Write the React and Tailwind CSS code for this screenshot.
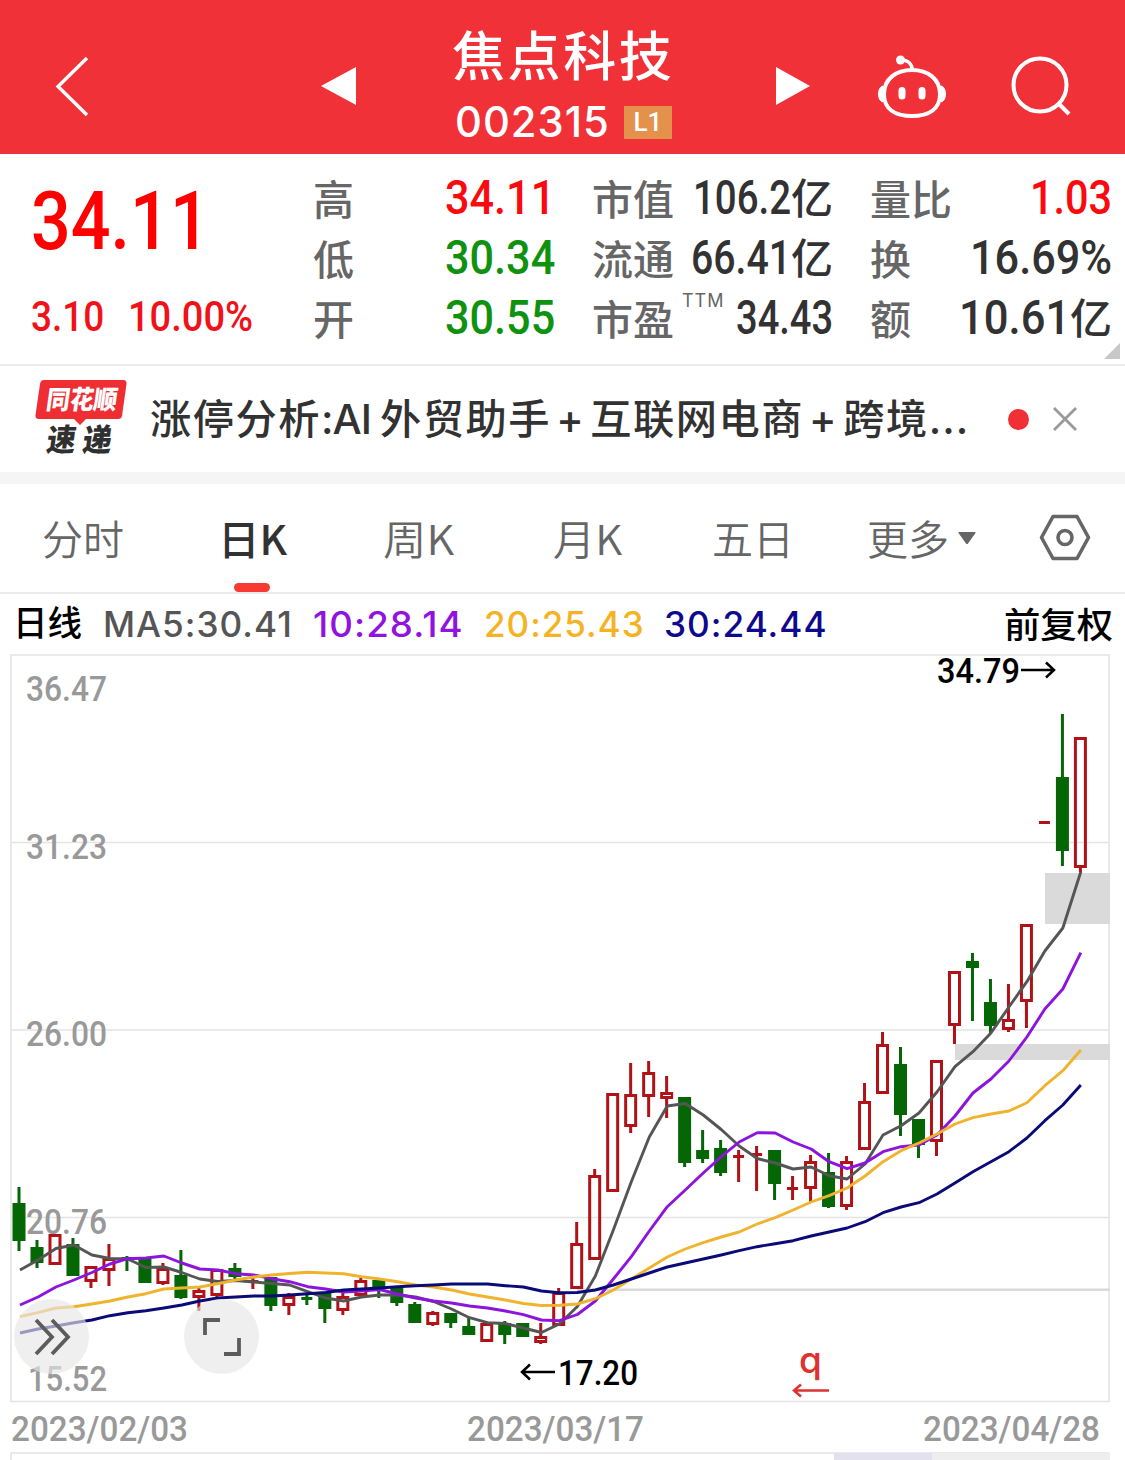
import { useLayoutEffect, useRef, useState } from "react";

const tabs = [
  { label: "分时", width: 82, gap: "ml-[42px]" },
  { label: "日K", width: 69, gap: "ml-[94px]", active: true },
  { label: "周K", width: 71, gap: "ml-[96px]" },
  { label: "月K", width: 69, gap: "ml-[99px]" },
  { label: "五日", width: 82, gap: "ml-[90px]" },
  { label: "更多", width: 82, gap: "ml-[73px]" },
];

const averages = [
  { text: "MA5:30.41", width: 190, gap: "ml-[21px]", color: "text-[#555555]" },
  { text: "10:28.14", width: 151, gap: "ml-[20px]", color: "text-[#9013e0]" },
  { text: "20:25.43", width: 161, gap: "ml-[20px]", color: "text-[#f5b324]" },
  { text: "30:24.44", width: 164, gap: "ml-[19px]", color: "text-[#0f0a8c]" },
];

// [up, body top, body bottom, wick top, wick bottom]
const candles = [
  [0, 1203, 1241, 1187, 1251],
  [0, 1247, 1263, 1240, 1268],
  [1, 1234, 1265, 1234, 1265],
  [0, 1244, 1276, 1238, 1276],
  [1, 1266, 1282, 1266, 1288],
  [1, 1258, 1271, 1244, 1286],
  [0, 1257, 1260, 1256, 1271],
  [0, 1258, 1283, 1258, 1283],
  [1, 1268, 1284, 1263, 1285],
  [0, 1275, 1298, 1250, 1299],
  [1, 1290, 1298, 1288, 1311],
  [1, 1269, 1296, 1269, 1299],
  [0, 1268, 1277, 1263, 1279],
  [1, 1280, 1283, 1277, 1289],
  [0, 1277, 1306, 1277, 1311],
  [1, 1296, 1306, 1293, 1315],
  [0, 1297, 1300, 1295, 1305],
  [0, 1293, 1309, 1293, 1323],
  [1, 1296, 1311, 1293, 1315],
  [1, 1280, 1296, 1278, 1296],
  [0, 1280, 1288, 1280, 1298],
  [0, 1287, 1303, 1287, 1306],
  [0, 1304, 1323, 1302, 1323],
  [1, 1312, 1325, 1311, 1326],
  [0, 1313, 1323, 1313, 1328],
  [0, 1326, 1335, 1318, 1335],
  [1, 1323, 1342, 1323, 1342],
  [0, 1323, 1335, 1321, 1344],
  [0, 1323, 1337, 1323, 1337],
  [1, 1336, 1343, 1323, 1344],
  [1, 1292, 1326, 1288, 1326],
  [1, 1243, 1289, 1222, 1289],
  [1, 1175, 1260, 1169, 1260],
  [1, 1093, 1192, 1093, 1192],
  [1, 1094, 1127, 1063, 1133],
  [1, 1072, 1097, 1061, 1117],
  [1, 1092, 1099, 1076, 1118],
  [0, 1097, 1163, 1097, 1167],
  [0, 1150, 1159, 1130, 1163],
  [0, 1148, 1173, 1140, 1176],
  [1, 1155, 1158, 1150, 1182],
  [1, 1153, 1156, 1146, 1191],
  [0, 1150, 1184, 1150, 1200],
  [1, 1187, 1190, 1176, 1200],
  [1, 1161, 1189, 1155, 1203],
  [0, 1172, 1207, 1153, 1208],
  [1, 1161, 1207, 1156, 1210],
  [1, 1101, 1150, 1083, 1150],
  [1, 1044, 1094, 1032, 1094],
  [0, 1064, 1115, 1047, 1136],
  [0, 1119, 1145, 1119, 1158],
  [1, 1060, 1142, 1060, 1156],
  [1, 971, 1026, 971, 1044],
  [0, 961, 968, 953, 1021],
  [0, 1002, 1026, 979, 1033],
  [1, 1019, 1030, 984, 1032],
  [1, 924, 1002, 924, 1028],
  [1, 821, 824, 821, 824],
  [0, 777, 851, 714, 866],
  [1, 737, 868, 737, 872],
];

const ma5 = [
  1270, 1260, 1248.5, 1245, 1255, 1258.5, 1259, 1267.5, 1267, 1272.5, 1279, 1281.5, 1280.5, 1282, 1283.5,
  1285, 1291.7, 1298, 1301, 1297, 1295, 1295, 1297, 1301.5, 1309, 1317.7, 1322.7, 1323.5, 1328, 1332.5,
  1324, 1306.5, 1276, 1230, 1181.7, 1137, 1106, 1103.5, 1115, 1129.5, 1146, 1158.5, 1163, 1169, 1167,
  1175.7, 1179, 1164, 1135, 1125.7, 1113, 1092, 1066.7, 1051.7, 1033, 1007, 981.7, 951, 928, 871.7,
];
const ma10 = [
  1305, 1297, 1287, 1280, 1272.5, 1264, 1258.7, 1258, 1256, 1263, 1269, 1270, 1273.7, 1275, 1278.7,
  1281.7, 1286.7, 1289, 1292, 1291, 1289.5, 1294, 1298, 1301, 1303, 1306, 1308, 1311, 1314.7, 1320,
  1320.7, 1314.5, 1301, 1279, 1256.7, 1231, 1206.7, 1190, 1173, 1156.7, 1142, 1132.7, 1133, 1142, 1149,
  1161.7, 1168.7, 1163, 1151.7, 1146.7, 1145, 1135, 1116, 1093, 1079, 1061, 1037, 1009, 989, 952.7,
];
const ma20 = [
  1316.7, 1312.7, 1308, 1306.7, 1304, 1301, 1297, 1293.7, 1289, 1288, 1287, 1283.7, 1280, 1277, 1275,
  1273.5, 1272.3, 1273, 1273.7, 1276.7, 1279, 1281.7, 1285, 1287, 1290, 1294, 1297, 1300, 1303.5, 1305.5,
  1305.3, 1304, 1298.7, 1290, 1279, 1268, 1257, 1249, 1242.7, 1237, 1232, 1224, 1217.7, 1210, 1202,
  1195.7, 1188, 1176, 1161.7, 1150.7, 1143, 1134, 1124, 1117.7, 1114, 1111, 1102.7, 1085.7, 1070.7, 1050,
];
const ma30 = [
  1333, 1329, 1326, 1322.7, 1320, 1315.7, 1312.7, 1310.7, 1308, 1305, 1301, 1298, 1297, 1296, 1296,
  1295, 1293.7, 1292.5, 1290, 1289, 1288, 1286.7, 1285.7, 1285, 1284, 1284, 1284, 1285.7, 1287, 1291,
  1292.8, 1292.5, 1290, 1285, 1279, 1273, 1267, 1263, 1259, 1255, 1250.7, 1246.7, 1243.7, 1240.7, 1236,
  1232, 1228, 1221.7, 1212.7, 1207, 1202.7, 1194, 1183, 1171.7, 1161.7, 1151.7, 1138, 1120.7, 1105, 1085,
];

const toPoints = (values) => values.map((y, i) => `${20 + i * 17.98},${y}`).join(" ");

// Squeezes or widens one line of text to the given width
const Fit = ({ width, className = "", children }) => {
  const ref = useRef(null);
  const [scale, setScale] = useState(1);

  useLayoutEffect(() => {
    if (ref.current) setScale(width / ref.current.offsetWidth);
  }, [width]);

  return (
    <span className={"inline-block shrink-0 " + className} style={{ width }}>
      <span ref={ref} className="inline-block origin-left whitespace-nowrap" style={{ transform: `scaleX(${scale})` }}>
        {children}
      </span>
    </span>
  );
};

const Header = () => (
  <header className="flex h-[154px] bg-[#f03238] text-white">
    <svg className="ml-[52px] mt-[54px] h-16 w-10 shrink-0" viewBox="0 0 40 64" fill="none" stroke="currentColor" strokeWidth="3.4">
      <path d="M35 4L6 32.500L35 61" />
    </svg>
    <svg className="ml-[229px] mt-[66px] h-10 w-9 shrink-0" viewBox="0 0 36 40" fill="currentColor">
      <path d="M0 20L35 1V39Z" />
    </svg>
    <div className="ml-[95px] w-[221px] shrink-0">
      <h1 className="mt-[22px] h-[62px] whitespace-nowrap text-[53px] font-medium leading-[62px] tracking-[2.600px]">焦点科技</h1>
      <div className="mt-[14px] flex items-center">
        <Fit width={155} className="ml-[3px] h-[48px] font-['Inter'] text-[42px] font-medium leading-[47px] tracking-[1px]">002315</Fit>
        <span className="ml-[14px] flex h-[33px] w-12 items-center justify-center bg-[#e3914b] font-['Roboto'] text-[26px] font-medium">L1</span>
      </div>
    </div>
    <svg className="ml-[102px] mt-[66px] h-10 w-9 shrink-0" viewBox="0 0 36 40" fill="currentColor">
      <path d="M1 1L35 20L1 39Z" />
    </svg>
    <svg className="ml-[65px] mt-[52px] h-[70px] w-[72px] shrink-0" viewBox="0 0 72 70" fill="none" stroke="currentColor" strokeWidth="4">
      <path d="M36 18C52 18 64 27 64 42C64 57 53 64 36 64C19 64 8 57 8 42C8 27 20 18 36 18Z" />
      <path d="M25 8C32 8 36 12 36.500 18" strokeWidth="3.500" />
      <circle cx="24.500" cy="8" r="4.500" fill="currentColor" stroke="none" />
      <path d="M7 34C1 35 1 49 7 50ZM65 34C71 35 71 49 65 50Z" fill="currentColor" strokeWidth="1" />
      <path d="M26 38.500V44M46 38.500V44" strokeWidth="7" strokeLinecap="round" />
    </svg>
    <svg className="ml-[60px] mt-[52px] h-[66px] w-[66px] shrink-0" viewBox="0 0 66 66" fill="none" stroke="currentColor" strokeWidth="4">
      <circle cx="32" cy="33" r="26.500" />
      <path d="M51 52L61 62" />
    </svg>
  </header>
);

const Row = ({ label, note, value, unit, width, color = "text-[#323232]" }) => (
  <div className="flex h-[60px] items-center">
    <span className="-mt-[3px] text-[41px] font-[450] text-[#666666]">{label}</span>
    {note && <sup className="relative -top-[18px] ml-[8px] font-['Inter'] text-[18px] tracking-[1px] text-[#666666]">{note}</sup>}
    <div className={"ml-auto flex items-center " + color}>
      <Fit width={width} className="h-[60px] font-['Roboto'] text-[47.500px] font-medium leading-[58px]">{value}</Fit>
      {unit && <span className="-mt-[7px] text-[42px] font-[450] leading-[56px]">{unit}</span>}
    </div>
  </div>
);

const Quote = () => (
  <section className="relative flex h-[212px] border-b-2 border-[#ededed]">
    <div className="w-[313px] pl-[31px]">
      <Fit width={179} className="mt-[20px] h-[94px] font-['Roboto'] text-[81px] font-medium leading-[96px] text-[#ff0000]">34.11</Fit>
      <div className="flex gap-[24px] font-['Roboto'] text-[42px] font-medium leading-[60px] text-[#f01218]">
        <Fit width={73} className="mt-[19px]">3.10</Fit>
        <Fit width={125} className="mt-[19px]">10.00%</Fit>
      </div>
    </div>
    <div className="w-[242px] pt-[15px]">
      <Row label="高" value="34.11" width={110} color="text-[#fa0a0e]" />
      <Row label="低" value="30.34" width={110} color="text-[#0f920f]" />
      <Row label="开" value="30.55" width={110} color="text-[#0f920f]" />
    </div>
    <div className="ml-[37px] w-[241px] pt-[15px]">
      <Row label="市值" value="106.2" unit="亿" width={98} />
      <Row label="流通" value="66.41" unit="亿" width={100} />
      <Row label="市盈" note="TTM" value="34.43" width={97} />
    </div>
    <div className="ml-[37px] w-[242px] pt-[15px]">
      <Row label="量比" value="1.03" width={82} color="text-[#fa0a0e]" />
      <Row label="换" value="16.69%" width={142} />
      <Row label="额" value="10.61" unit="亿" width={111} />
    </div>
    <svg className="absolute right-[5px] bottom-[5px] h-4 w-4" viewBox="0 0 16 16" fill="#c8c8c8">
      <path d="M16 0V16H0Z" />
    </svg>
  </section>
);

const News = () => (
  <section className="flex h-[118px] items-center border-b-[12px] border-[#f5f5f5]">
    <svg className="ml-[34px] h-[86px] w-[96px] shrink-0" viewBox="0 0 96 86">
      <path d="M10 4H89Q93 4 92.500 8L88 40Q87.500 43 84 43H52L46 49L40 43H5Q1 43 1.500 39L6 8Q6.500 4 10 4Z" fill="#ee2e33" />
      <g fontFamily="Noto Sans CJK SC" fontWeight="900">
        <text x="16" y="33.500" fontSize="26" fill="#ffffff" textLength="71" lengthAdjust="spacingAndGlyphs" transform="skewX(-8)">同花顺</text>
        <text x="22" y="75" fontSize="31" fill="#303030" transform="skewX(-8)" textLength="29" lengthAdjust="spacingAndGlyphs">速</text>
        <text x="58" y="75" fontSize="31" fill="#303030" transform="skewX(-8)" textLength="29" lengthAdjust="spacingAndGlyphs">递</text>
      </g>
    </svg>
    <Fit
      width={819}
      className="mt-[1px] ml-[20px] font-['Inter','Noto_Sans_CJK_SC',sans-serif] text-[41px] font-medium tracking-[1.500px] text-[#323232]"
    >
      涨停分析<span className="tracking-[-1px]">:AI</span>
      <span className="ml-[9px]">外贸助手</span>
      <span className="mx-[5px]">+</span>互联网电商<span className="mx-[5px]">+</span>跨境
      <span className="tracking-[1px]">...</span>
    </Fit>
    <span className="ml-[39px] size-[21px] rounded-full bg-[#f03035]" />
    <svg className="ml-[24px] size-6" viewBox="0 0 24 24" stroke="#999999" strokeWidth="2.800">
      <path d="M1 1L23 23M23 1L1 23" />
    </svg>
  </section>
);

const Tabs = () => (
  <nav className="flex h-[110px] items-start border-b-2 border-[#ebebeb]">
    {tabs.map((tab) => (
      <div key={tab.label} className={"flex flex-col items-center " + tab.gap}>
        <Fit
          width={tab.width}
          className={"mt-[17px] h-[82px] text-[41px] leading-[72px] " + (tab.active ? "font-medium text-[#323232]" : "font-[350] text-[#666666]")}
        >
          {tab.label}
        </Fit>
        {tab.active && <span className="mr-[1px] h-[9px] w-9 rounded-full bg-[#f73b33]" />}
      </div>
    ))}
    <svg className="ml-[9px] mt-[48px] h-3 w-[18px]" viewBox="0 0 18 12" fill="#666666">
      <path d="M1 0H17Q18 0 17.500 1L10 11.500Q9 12.500 8 11.500L0.500 1Q0 0 1 0Z" />
    </svg>
    <svg className="ml-[62px] mt-[29px] h-12 w-[54px]" viewBox="0 0 54 48" fill="none" stroke="#666666" strokeWidth="3.600" strokeLinejoin="round">
      <path d="M15 3.500H39L50.500 24.500L39 45.500H15L3.500 24.500Z" />
      <circle cx="27" cy="24.500" r="7" />
    </svg>
  </nav>
);

const Legend = () => (
  <div className="flex h-[60px] items-center">
    <Fit width={69} className="-mt-[6px] ml-[13px] text-[35px] font-medium leading-[56px] text-black">日线</Fit>
    {averages.map((item) => (
      <Fit
        key={item.text}
        width={item.width}
        className={"font-['Inter'] text-[35px] font-medium leading-[58px] tracking-[1px] " + item.gap + " " + item.color}
      >
        {item.text}
      </Fit>
    ))}
    <Fit width={109} className="-mt-[3px] ml-auto mr-[12px] text-[35px] font-medium leading-[56px] text-black">前复权</Fit>
  </div>
);

const Candle = ({ x, data }) => {
  const [up, top, bottom, high, low] = data;
  const color = up ? "#b01217" : "#056605";
  const flat = bottom - top <= 3;

  return (
    <g fill={color}>
      {high < top && <rect x={x - 1.5} y={high} width="3" height={top - high} />}
      {low > bottom && <rect x={x - 1.5} y={bottom} width="3" height={low - bottom} />}
      {up && !flat ? (
        <rect x={x - 5} y={top + 1.5} width="10" height={bottom - top - 3} fill="none" stroke={color} strokeWidth="3" />
      ) : (
        <rect x={flat ? x - 5.5 : x - 6.5} y={top} width={flat ? 11 : 13} height={bottom - top} />
      )}
    </g>
  );
};

const Chart = () => (
  <div className="relative h-[806px]">
    <svg className="block h-[806px] w-full overflow-visible" viewBox="0 654 1125 806" fontFamily="Roboto">
      <g fill="none" stroke="#e4e4e4" strokeWidth="1.600">
        <path d="M11 655H1109V1401.500H11ZM11 842.500H1109M11 1030H1109M11 1217.500H1109" />
        <path d="M11 1460V1453H1109" />
      </g>

      <g fill="#999999" fontSize="34.500" fontWeight="500">
        <text x="26" y="701" textLength="81" lengthAdjust="spacingAndGlyphs">36.47</text>
        <text x="26" y="858.500" textLength="81" lengthAdjust="spacingAndGlyphs">31.23</text>
        <text x="26" y="1046" textLength="81" lengthAdjust="spacingAndGlyphs">26.00</text>
        <text x="26" y="1233.500" textLength="81" lengthAdjust="spacingAndGlyphs">20.76</text>
        <text x="28" y="1391" textLength="79" lengthAdjust="spacingAndGlyphs">15.52</text>
        <text x="11" y="1440.500" textLength="177" lengthAdjust="spacingAndGlyphs">2023/02/03</text>
        <text x="467" y="1440.500" textLength="177" lengthAdjust="spacingAndGlyphs">2023/03/17</text>
        <text x="923" y="1440.500" textLength="177" lengthAdjust="spacingAndGlyphs">2023/04/28</text>
      </g>

      {/* Price gaps */}
      <g fill="#dadada">
        <rect x="1045" y="873" width="65" height="51" />
        <rect x="955" y="1044" width="155" height="16" />
        <rect x="577" y="1288.500" width="533" height="2.500" />
      </g>

      {candles.map((data, i) => (
        <Candle key={i} x={19 + i * 17.99} data={data} />
      ))}

      <g fill="none" strokeWidth="2.900" strokeLinejoin="round">
        <polyline points={toPoints(ma5)} stroke="#555555" />
        <polyline points={toPoints(ma10)} stroke="#8c14dc" />
        <polyline points={toPoints(ma20)} stroke="#f0b32d" />
        <polyline points={toPoints(ma30)} stroke="#0a0a78" />
      </g>

      <g fontSize="34.500" fontWeight="500">
        <text x="937" y="683" textLength="83" lengthAdjust="spacingAndGlyphs">34.79</text>
        <text x="558" y="1384.500" textLength="80" lengthAdjust="spacingAndGlyphs">17.20</text>
      </g>
      <g fill="none" stroke="#000000" strokeWidth="2.500">
        <path d="M1021 670H1053M1046 662.500L1054 670L1046 677.500" />
        <path d="M555 1372H523M530 1364.500L522 1372L530 1379.500" />
        <path d="M829 1390.500H795M801 1384.500L794 1390.500L801 1396.500" stroke="#dc3232" />
      </g>
      <text x="799" y="1373" fill="#dc3232" fontFamily="Inter" fontSize="37" fontWeight="500">q</text>

      {/* Top edge of the volume panel */}
      <rect x="834" y="1453" width="276" height="7" fill="#eeeeee" />
      <rect x="834" y="1453" width="98" height="7" fill="#e3e1ee" />
    </svg>

    <button className="absolute left-[14px] top-[645px] flex size-[75px] items-center justify-center rounded-full bg-[#e6e6e6]/65">
      <svg className="h-9 w-[38px]" viewBox="0 0 38 36" fill="none" stroke="#5c5c5c" strokeWidth="3.800">
        <path d="M3 1L19 18L3 35M19 1L35 18L19 35" />
      </svg>
    </button>
    <button className="absolute left-[184px] top-[645px] flex size-[75px] items-center justify-center rounded-full bg-[#e6e6e6]/65">
      <svg className="size-10" viewBox="0 0 40 40" fill="none" stroke="#5c5c5c" strokeWidth="3.800">
        <path d="M3 18V3H18M22 37H37V21" />
      </svg>
    </button>
  </div>
);

export default function App() {
  return (
    <main className="h-[1460px] w-[1125px] overflow-hidden bg-white font-['Noto_Sans_CJK_SC',sans-serif]">
      <Header />
      <Quote />
      <News />
      <Tabs />
      <Legend />
      <Chart />
    </main>
  );
}
